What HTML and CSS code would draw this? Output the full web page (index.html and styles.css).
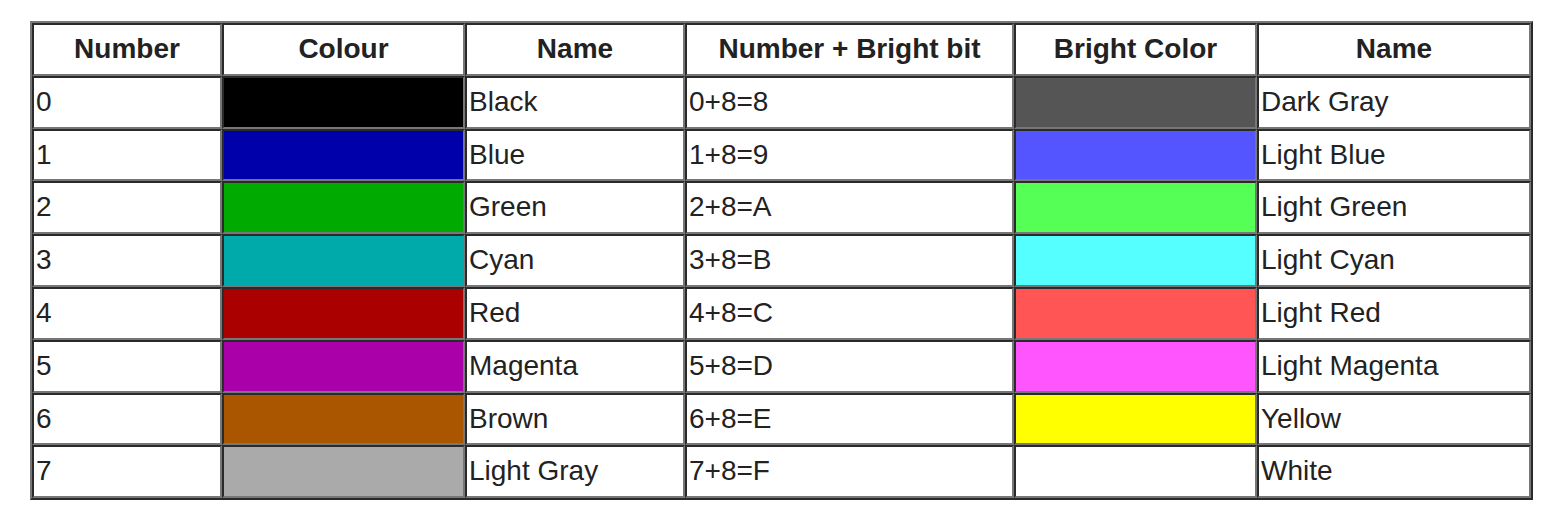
FILE: index.html
```html
<!DOCTYPE html>
<html>
<head>
<meta charset="utf-8">
<link rel="stylesheet" href="styles.css">
</head>
<body>
<table class="palette">
  <thead>
    <tr>
      <th class="c1">Number</th>
      <th class="c2">Colour</th>
      <th class="c3">Name</th>
      <th class="c4">Number + Bright bit</th>
      <th class="c5">Bright Color</th>
      <th class="c6">Name</th>
    </tr>
  </thead>
  <tbody>
    <tr><td>0</td><td class="sw k0"></td><td>Black</td><td>0+8=8</td><td class="sw k8"></td><td>Dark Gray</td></tr>
    <tr><td>1</td><td class="sw k1"></td><td>Blue</td><td>1+8=9</td><td class="sw k9"></td><td>Light Blue</td></tr>
    <tr><td>2</td><td class="sw k2"></td><td>Green</td><td>2+8=A</td><td class="sw kA"></td><td>Light Green</td></tr>
    <tr><td>3</td><td class="sw k3"></td><td>Cyan</td><td>3+8=B</td><td class="sw kB"></td><td>Light Cyan</td></tr>
    <tr><td>4</td><td class="sw k4"></td><td>Red</td><td>4+8=C</td><td class="sw kC"></td><td>Light Red</td></tr>
    <tr><td>5</td><td class="sw k5"></td><td>Magenta</td><td>5+8=D</td><td class="sw kD"></td><td>Light Magenta</td></tr>
    <tr><td>6</td><td class="sw k6"></td><td>Brown</td><td>6+8=E</td><td class="sw kE"></td><td>Yellow</td></tr>
    <tr><td>7</td><td class="sw k7"></td><td>Light Gray</td><td>7+8=F</td><td class="sw kF"></td><td>White</td></tr>
  </tbody>
</table>
</body>
</html>
```
FILE: styles.css
```css
html, body {
  margin: 0;
  padding: 0;
  background: #ffffff;
}
body {
  font-family: "Liberation Sans", Arial, sans-serif;
  color: #222222;
}
.palette {
  margin: 21px 0 0 30px;
  width: 1503px;
  table-layout: fixed;
  border-collapse: separate;
  border-spacing: 0;
  border: 2px solid;
  border-color: #777777 #2a2a2a #2a2a2a #777777;
  font-size: 28px;
  line-height: 32.8px;
}
.palette th,
.palette td {
  box-sizing: border-box;
  border: 2px solid;
  border-color: #2a2a2a #777777 #777777 #2a2a2a;
  padding: 8px 2px;
  text-align: left;
  vertical-align: middle;
  white-space: nowrap;
}
.palette th {
  font-weight: bold;
  text-align: center;
}
.c1 { width: 190px; }
.c2 { width: 243px; }
.c3 { width: 220px; }
.c4 { width: 329px; }
.c5 { width: 243px; }
.c6 { width: 274px; }
.k0 { background: #000000; }
.k1 { background: #0000aa; }
.k2 { background: #00aa00; }
.k3 { background: #00aaaa; }
.k4 { background: #aa0000; }
.k5 { background: #aa00aa; }
.k6 { background: #aa5500; }
.k7 { background: #aaaaaa; }
.k8 { background: #555555; }
.k9 { background: #5555ff; }
.kA { background: #55ff55; }
.kB { background: #55ffff; }
.kC { background: #ff5555; }
.kD { background: #ff55ff; }
.kE { background: #ffff00; }
.kF { background: #ffffff; }
```
